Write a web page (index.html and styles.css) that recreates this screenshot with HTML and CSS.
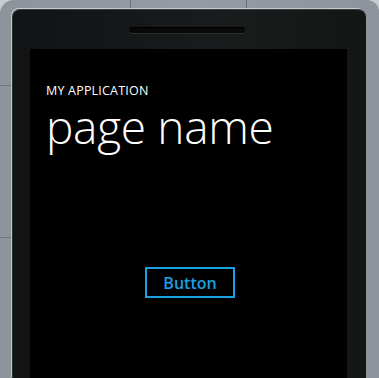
FILE: index.html
```html
<!DOCTYPE html>
<html>
<head>
<meta charset="utf-8">
<link rel="stylesheet" href="styles.css">
</head>
<body>
<div class="phone">
  <div class="bezel">
    <div class="speaker-row"><div class="speaker"></div></div>
    <div class="screen">
      <div class="app-title">MY APPLICATION</div>
      <div class="page-title">page name</div>
      <div class="content">
        <div class="button">Button</div>
      </div>
    </div>
  </div>
</div>
</body>
</html>
```

FILE: styles.css
```css
html, body {
  margin: 0;
  padding: 0;
  height: 378px;
  overflow: hidden;
  background: #c9ccd0;
}
.phone {
  height: 369px;
  padding: 9px 13px 0 12px;
  border-radius: 14px 12px 0 0;
  background:
    linear-gradient(#6c7178, #6c7178) 130px 0 / 1px 8px no-repeat,
    linear-gradient(#6c7178, #6c7178) 246px 0 / 1px 8px no-repeat,
    linear-gradient(#6f747b, #6f747b) 0 85px / 11px 1px no-repeat,
    linear-gradient(#6f747b, #6f747b) 0 237px / 11px 1px no-repeat,
    linear-gradient(90deg, #8e949b 0%, #959ba3 50%, #8e949b 100%);
}
.bezel {
  height: 369px;
  display: flex;
  flex-direction: column;
  border-radius: 8px 8px 0 0;
  border-top: 1px solid #3a3d40;
  border-left: 1px solid #2a2c2e;
  box-shadow: -1px -1px 0 #c7cacd;
  background: linear-gradient(90deg, #121314 0%, #1a1b1c 60%, #141515 100%);
  padding: 0 19px 0 17px;
  box-sizing: border-box;
}
.speaker-row {
  height: 39px;
  display: flex;
  justify-content: center;
  padding-top: 17px;
  padding-right: 4px;
  box-sizing: border-box;
}
.speaker {
  width: 116px;
  height: 6px;
  border-radius: 3px;
  background: #080909;
  box-shadow: 0 1px 0 #2b2d2f, inset 0 1px 1px #000;
}
.screen {
  flex: 1;
  background: #000;
  padding-left: 16px;
  font-family: "Open Sans", "Noto Sans", sans-serif;
  color: #fff;
}
.app-title {
  font-size: 12.5px;
  line-height: 16px;
  margin-top: 34px;
  letter-spacing: 0.2px;
}
.page-title {
  font-size: 46px;
  font-weight: 300;
  line-height: 46px;
  margin-top: 4px;
  letter-spacing: -0.3px;
}
.content {
  padding-top: 118px;
  padding-left: 99px;
  display: flex;
}
.button {
  width: 86px;
  height: 27px;
  border: 2px solid #1ba1e2;
  color: #1ba1e2;
  font-size: 16px;
  font-weight: 600;
  display: flex;
  align-items: center;
  justify-content: center;
}
```
